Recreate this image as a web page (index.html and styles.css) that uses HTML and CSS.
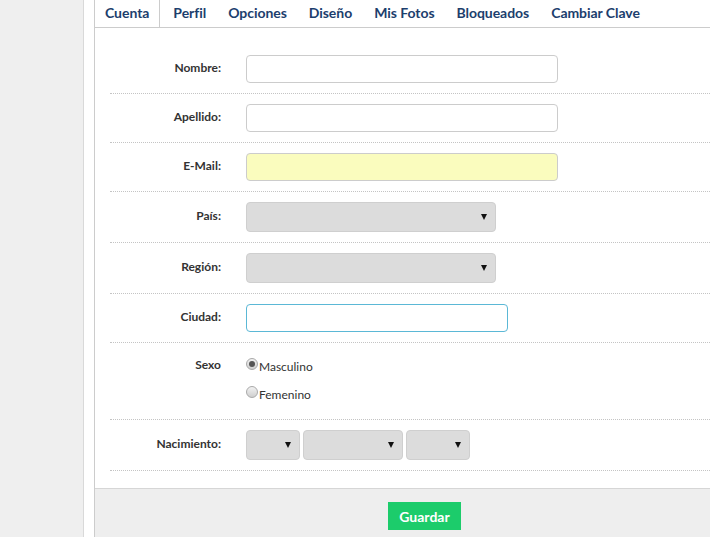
FILE: index.html
```html
<!DOCTYPE html>
<html lang="es">
<head>
  <meta charset="UTF-8">
  <meta name="viewport" content="width=device-width, initial-scale=1">
  <title>Mi Cuenta</title>
  <link rel="stylesheet" href="styles.css">
</head>
<body>

  <div class="layout">
    <aside class="sidebar"></aside>

    <main class="main">
      <div class="panel">
        <ul class="tabs">
          <li class="active"><a href="#">Cuenta</a></li>
          <li><a href="#">Perfil</a></li>
          <li><a href="#">Opciones</a></li>
          <li><a href="#">Diseño</a></li>
          <li><a href="#">Mis Fotos</a></li>
          <li><a href="#">Bloqueados</a></li>
          <li><a href="#">Cambiar Clave</a></li>
        </ul>

        <form id="cuentaForm">
          <div class="fields">
            <div class="row">
              <label for="nombre">Nombre:</label>
              <input type="text" id="nombre" class="wide">
            </div>

            <div class="row">
              <label for="apellido">Apellido:</label>
              <input type="text" id="apellido" class="wide">
            </div>

            <div class="row">
              <label for="email">E-Mail:</label>
              <input type="text" id="email" class="wide autofill">
            </div>

            <div class="row">
              <label for="pais">País:</label>
              <span class="select pais"><select id="pais"><option></option></select></span>
            </div>

            <div class="row">
              <label for="region">Región:</label>
              <span class="select pais"><select id="region"><option></option></select></span>
            </div>

            <div class="row">
              <label for="ciudad">Ciudad:</label>
              <input type="text" id="ciudad" class="ciudad">
            </div>

            <div class="row row-top">
              <label>Sexo</label>
              <div class="radios">
                <label class="radio"><input type="radio" name="sexo" checked>Masculino</label>
                <label class="radio"><input type="radio" name="sexo">Femenino</label>
              </div>
            </div>

            <div class="row">
              <label>Nacimiento:</label>
              <div class="fecha">
                <span class="select dia"><select><option></option></select></span>
                <span class="select mes"><select><option></option></select></span>
                <span class="select anio"><select><option></option></select></span>
              </div>
            </div>
          </div>

          <div class="actions">
            <button type="submit">Guardar</button>
          </div>
        </form>
      </div>
    </main>
  </div>

</body>
</html>
```

FILE: styles.css
```css
:root {
  --tab-color: #1c3e6d;
  --label-color: #333;
  --border-color: #ccc;
  --side-color: #efefef;
  --select-color: #dcdcdc;
  --green: #1ccc6b;
}

* {
  box-sizing: border-box;
  margin: 0;
  padding: 0;
}

body {
  font-family: Lato, "Open Sans", sans-serif;
  background: #fff;
  color: var(--label-color);
  overflow: hidden;
}

.layout {
  display: flex;
  min-height: 537px;
}

.sidebar {
  width: 84px;
  flex: none;
  background: var(--side-color);
  border-right: 1px solid #d9d9d9;
}

.main {
  flex: 1;
  padding-left: 10px;
}

.panel {
  width: 660px;
  min-height: 537px;
  border-left: 1px solid var(--border-color);
  display: flex;
  flex-direction: column;
}

/* tabs */
.tabs {
  list-style: none;
  display: flex;
  border-bottom: 1px solid var(--border-color);
  height: 28px;
}

.tabs a {
  display: block;
  padding: 3px 10px 4px;
  line-height: 20px;
  font-size: 14px;
  font-weight: bold;
  letter-spacing: -0.05px;
  color: var(--tab-color);
  text-decoration: none;
  border: 1px solid transparent;
  border-top: none;
}

.tabs li.active a {
  background: #fff;
  border-color: var(--border-color);
  height: 28px;
  margin-left: -1px;
  margin-right: 2px;
}

/* form rows */
form {
  flex: 1;
  display: flex;
  flex-direction: column;
}

.fields {
  padding: 17px 0 17px 15px;
}

.row {
  display: grid;
  grid-template-columns: 111px 1fr;
  column-gap: 25px;
  align-items: center;
  padding: 10px 0;
  border-bottom: 1px dotted #c4c4c4;
}

.row-top {
  align-items: start;
}

.row > label {
  text-align: right;
  font-size: 12px;
  font-weight: bold;
  color: var(--label-color);
  padding-bottom: 4px;
}

.row-top > label {
  line-height: 24px;
  padding-bottom: 0;
}

input[type="text"] {
  height: 28px;
  border: 1px solid var(--border-color);
  border-radius: 4px;
  background: #fff;
  font-family: inherit;
  font-size: 12px;
  padding: 0 6px;
  outline: none;
}

input.wide {
  width: 312px;
}

input.autofill {
  background: #fafcbe;
}

input.ciudad {
  width: 262px;
  border-color: #5bb8d6;
}

/* selects with the little arrow */
.select {
  position: relative;
  display: inline-block;
  height: 30px;
}

.select select {
  appearance: none;
  -webkit-appearance: none;
  width: 100%;
  height: 100%;
  border: 1px solid #cfcfcf;
  border-radius: 4px;
  background: var(--select-color);
  font-family: inherit;
  outline: none;
}

.select::after {
  content: "";
  position: absolute;
  right: 9px;
  top: 12px;
  border-left: 3px solid transparent;
  border-right: 3px solid transparent;
  border-top: 6px solid #111;
  pointer-events: none;
}

.pais { width: 250px; }
.dia { width: 54px; }
.mes { width: 100px; }
.anio { width: 64px; }

.fecha {
  display: flex;
  gap: 3px;
}

/* sexo */
.radios {
  display: flex;
  flex-direction: column;
  gap: 4px;
  padding: 2px 0;
}

.radio {
  display: flex;
  align-items: flex-start;
  font-size: 12px;
  line-height: 24px;
  color: var(--label-color);
}

.radio input {
  appearance: none;
  -webkit-appearance: none;
  width: 12px;
  height: 12px;
  margin-top: 3px;
  margin-right: 1px;
  border: 1px solid #a9a9a9;
  border-radius: 50%;
  background: linear-gradient(#f2f2f2, #cfcfcf);
  position: relative;
}

.radio input:checked::after {
  content: "";
  position: absolute;
  left: 2px;
  top: 2px;
  width: 6px;
  height: 6px;
  border-radius: 50%;
  background: #555;
}

/* footer */
.actions {
  flex: 1;
  background: #eee;
  border-top: 1px solid #d6d6d6;
  padding: 13px 0 13px 293px;
}

button {
  width: 73px;
  height: 28px;
  border: none;
  background: var(--green);
  color: #fff;
  font-family: inherit;
  font-size: 14px;
  font-weight: bold;
  cursor: pointer;
}
```
